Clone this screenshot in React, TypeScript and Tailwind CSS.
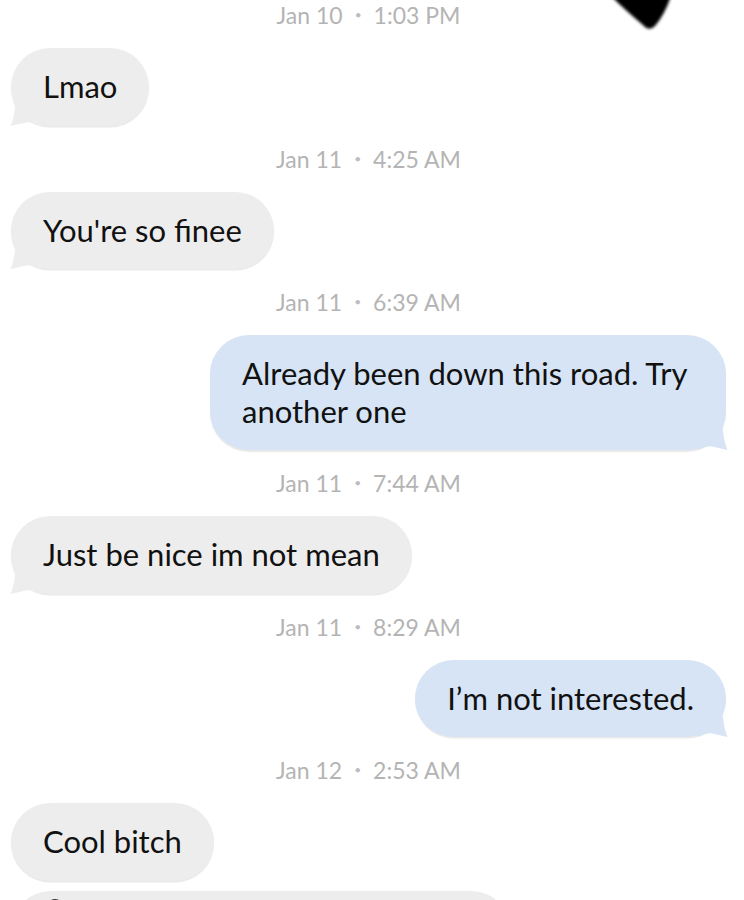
import React from 'react';

type Msg =
  | { kind: 'stamp'; day: string; time: string }
  | { kind: 'bubble'; side: 'left' | 'right'; text: string; tail?: boolean };

const thread: Msg[] = [
  { kind: 'stamp', day: 'Jan 10', time: '1:03 PM' },
  { kind: 'bubble', side: 'left', text: 'Lmao', tail: true },
  { kind: 'stamp', day: 'Jan 11', time: '4:25 AM' },
  { kind: 'bubble', side: 'left', text: "You're so finee", tail: true },
  { kind: 'stamp', day: 'Jan 11', time: '6:39 AM' },
  { kind: 'bubble', side: 'right', text: 'Already been down this road. Try another one', tail: true },
  { kind: 'stamp', day: 'Jan 11', time: '7:44 AM' },
  { kind: 'bubble', side: 'left', text: 'Just be nice im not mean', tail: true },
  { kind: 'stamp', day: 'Jan 11', time: '8:29 AM' },
  { kind: 'bubble', side: 'right', text: 'I\u2019m not interested.', tail: true },
  { kind: 'stamp', day: 'Jan 12', time: '2:53 AM' },
  { kind: 'bubble', side: 'left', text: 'Cool bitch' },
];

function Stamp({ day, time }: { day: string; time: string }) {
  return (
    <div className="flex h-[26px] items-center justify-center text-[23px] leading-[26px] text-[#b4b4b4]">
      <span>{day}</span>
      <span className="mx-[12px] text-[12px] text-[#bdbdbd]">•</span>
      <span>{time}</span>
    </div>
  );
}

// little speech tail drawn at the bottom corner of a bubble
function Tail({ color, flip }: { color: string; flip?: boolean }) {
  return (
    <svg
      viewBox="0 0 30 30"
      className={`absolute bottom-0 h-[30px] w-[30px] ${flip ? '-right-[2px] -scale-x-100' : '-left-[1px]'}`}
    >
      <path d="M6 0 L30 0 L30 30 Q23 25.5 16 26.5 L0.5 30 Q5 20 6 0 Z" fill={color} />
    </svg>
  );
}

function Bubble({ side, text, tail }: { side: 'left' | 'right'; text: string; tail?: boolean }) {
  const mine = side === 'right';
  return (
    <div className={`flex ${mine ? 'justify-end' : 'justify-start'}`}>
      <div
        className={`relative rounded-[39px] px-[32px] py-[20px] text-[31px] leading-[37.5px] text-[#111111] shadow-[0_1.5px_1px_rgba(0,0,0,0.09)] ${
          mine ? 'max-w-[516px] bg-[#d6e4f5]' : 'bg-[#ededed]'
        }`}
      >
        {tail && <Tail color={mine ? '#d6e4f5' : '#ededed'} flip={mine} />}
        <span className="relative">{text}</span>
      </div>
    </div>
  );
}

export default function App() {
  return (
    <div className="relative h-[900px] w-full overflow-hidden bg-white font-[family-name:Lato,sans-serif]">
      <div className="flex flex-col gap-[20px] pt-[2px] pl-[11px] pr-[18px]">
        {thread.map((m, i) =>
          m.kind === 'stamp' ? (
            <Stamp key={i} day={m.day} time={m.time} />
          ) : (
            <Bubble key={i} side={m.side} text={m.text} tail={m.tail} />
          )
        )}
      </div>

      {/* next message peeking in at the bottom */}
      <div className="relative mt-[10px] ml-[11px] h-[60px] w-[500px] rounded-t-[40px] bg-[#ededed]">
        <div className="absolute top-[8px] left-[36px] h-[10px] w-[16px] rounded-t-full bg-[#3a3a3a]" />
      </div>

      {/* dark blob over the top right corner */}
      <svg viewBox="0 0 80 36" className="absolute top-0 left-[605px] h-[36px] w-[80px]">
        <defs>
          <filter id="soft" x="-20%" y="-20%" width="140%" height="140%">
            <feGaussianBlur stdDeviation="1.6" />
          </filter>
        </defs>
        <path d="M6 -4 L66 -4 Q60 14 50 26 Q44 32 38 25 Q20 10 6 -4 Z" fill="#000" filter="url(#soft)" />
      </svg>
    </div>
  );
}
